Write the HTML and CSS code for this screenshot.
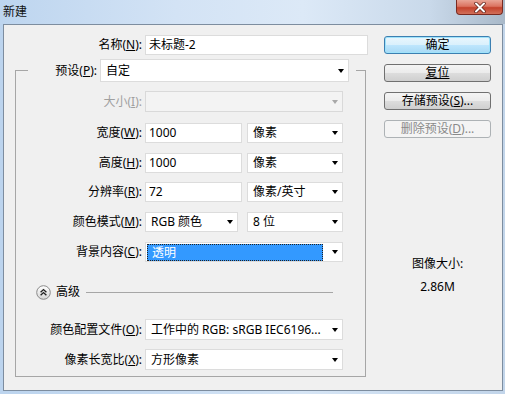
FILE: index.html
```html
<!DOCTYPE html>
<html lang="zh-CN">
<head>
    <meta charset="UTF-8">
    <title>新建</title>
    <link rel="stylesheet" href="styles.css">
</head>
<body>
<div class="window">
    <div class="titlebar">
        <span class="title">新建</span>
        <span class="close">
            <svg width="14" height="11" viewBox="0 0 14 11">
                <path d="M3 1.5 L11 9.5 M11 1.5 L3 9.5" stroke="#5a1e16" stroke-width="3.4" stroke-linecap="round"/>
                <path d="M3 1.5 L11 9.5 M11 1.5 L3 9.5" stroke="#ffffff" stroke-width="2" stroke-linecap="round"/>
            </svg>
        </span>
    </div>
    <div class="frame">
        <div class="form">
            <div class="row name-row">
                <label class="lbl">名称(<u>N</u>):</label>
                <div class="input w-name">未标题-2</div>
            </div>

            <div class="group">
                <div class="group-head">
                    <label class="lbl head-lbl">预设(<u>P</u>):</label>
                    <div class="select w-preset"><span class="val">自定</span><i class="arrow"></i></div>
                </div>

                <div class="row r-size">
                    <label class="lbl off">大小(<u>I</u>):</label>
                    <div class="select disabled w-full"><span class="val"></span><i class="arrow"></i></div>
                </div>
                <div class="row r-width">
                    <label class="lbl">宽度(<u>W</u>):</label>
                    <div class="input w-num">1000</div>
                    <div class="select w-unit"><span class="val">像素</span><i class="arrow"></i></div>
                </div>
                <div class="row r-height">
                    <label class="lbl">高度(<u>H</u>):</label>
                    <div class="input w-num">1000</div>
                    <div class="select w-unit"><span class="val">像素</span><i class="arrow"></i></div>
                </div>
                <div class="row r-res">
                    <label class="lbl">分辨率(<u>R</u>):</label>
                    <div class="input w-num">72</div>
                    <div class="select w-unit"><span class="val">像素/英寸</span><i class="arrow"></i></div>
                </div>
                <div class="row r-mode">
                    <label class="lbl">颜色模式(<u>M</u>):</label>
                    <div class="select w-mode"><span class="val">RGB 颜色</span><i class="arrow"></i></div>
                    <div class="select w-unit gap-wide"><span class="val">8 位</span><i class="arrow"></i></div>
                </div>
                <div class="row r-bg">
                    <label class="lbl">背景内容(<u>C</u>):</label>
                    <div class="select focus w-full"><span class="val">透明</span><i class="arrow"></i></div>
                </div>

                <div class="advanced">
                    <svg class="adv-btn" width="15" height="15" viewBox="0 0 15 15">
                        <defs>
                            <linearGradient id="advg" x1="0" y1="0" x2="0" y2="1">
                                <stop offset="0" stop-color="#ffffff"/>
                                <stop offset="1" stop-color="#d6d6d6"/>
                            </linearGradient>
                        </defs>
                        <circle cx="7.5" cy="7.5" r="6.8" fill="url(#advg)" stroke="#8a8a8a"/>
                        <path d="M4.6 7.2 L7.5 4.6 L10.4 7.2 M4.6 10.2 L7.5 7.6 L10.4 10.2" fill="none" stroke="#222" stroke-width="1.4"/>
                    </svg>
                    <span class="adv-text">高级</span>
                    <span class="adv-line"></span>
                </div>

                <div class="row r-profile">
                    <label class="lbl">颜色配置文件(<u>O</u>):</label>
                    <div class="select w-full"><span class="val">工作中的 RGB: sRGB IEC6196...</span><i class="arrow"></i></div>
                </div>
                <div class="row r-aspect">
                    <label class="lbl">像素长宽比(<u>X</u>):</label>
                    <div class="select w-full"><span class="val">方形像素</span><i class="arrow"></i></div>
                </div>
            </div>
        </div>

        <div class="side">
            <button class="btn default">确定</button>
            <button class="btn"><u>复位</u></button>
            <button class="btn">存储预设(<u>S</u>)...</button>
            <button class="btn disabled">删除预设(<u>D</u>)...</button>
            <div class="info">
                <div>图像大小:</div>
                <div class="info-size">2.86M</div>
            </div>
        </div>
    </div>
</div>
</body>
</html>
```

FILE: styles.css
```css
/* page */
body {
  margin: 0;
  font-family: "Noto Sans", "Noto Sans CJK SC", sans-serif;
  font-size: 12px;
  color: #000;
}

.window {
  width: 505px;
  height: 394px;
  overflow: hidden;
  background: linear-gradient(to right, #bcd4ee, #c8dcf2 30%, #d6e5f5 60%, #c2d5ea 100%);
}

/* title bar */
.titlebar {
  height: 24px;
  display: flex;
  justify-content: space-between;
  align-items: flex-start;
  background: linear-gradient(to right, #bdd5ef 0%, #d3e3f5 35%, #dce9f7 60%, #c9d9ea 85%, #a9b9c9 100%);
}

.title {
  margin: 3px 0 0 3px;
  line-height: 18px;
  font-size: 12px;
  color: #111;
}

.close {
  width: 45px;
  height: 14px;
  margin-right: 2px;
  border: 1px solid #7a2a20;
  border-top: none;
  border-radius: 0 0 4px 4px;
  background: linear-gradient(#e9a596 0%, #db7360 45%, #c4422c 55%, #d1705a 100%);
  display: flex;
  justify-content: center;
  align-items: center;
}

/* client area */
.frame {
  height: 365px;
  margin: 0 2px 0 3px;
  border: 1px solid #7d8d9f;
  background: #f0f0f0;
  display: flex;
}

.form {
  width: 364px;
}

.row {
  display: flex;
  align-items: center;
  height: 20px;
}

.lbl {
  text-align: right;
  margin-right: 3px;
  white-space: nowrap;
  line-height: 16px;
}

.lbl.off {
  color: #a0a0a0;
}

.name-row {
  margin-top: 10px;
}

.name-row .lbl {
  width: 138px;
}

/* fields */
.input,
.select {
  box-sizing: border-box;
  height: 100%;
  background: #fff;
  border: 1px solid #dcdcdc;
  display: flex;
  align-items: center;
  white-space: nowrap;
  line-height: 16px;
}

.input {
  padding-left: 3px;
}

.select .val {
  flex: 1;
  padding-left: 5px;
  overflow: hidden;
}

.arrow {
  width: 0;
  height: 0;
  margin-right: 4px;
  border-left: 3.5px solid transparent;
  border-right: 3.5px solid transparent;
  border-top: 4px solid #000;
}

.select.disabled {
  background: #f3f3f3;
  border-color: #d9d9d9;
}

.select.disabled .arrow {
  border-top-color: #a8a8a8;
}

.select.focus .val {
  flex: none;
  box-sizing: border-box;
  width: 176px;
  height: 17px;
  margin-left: 1px;
  padding-left: 4px;
  background: #3399ff;
  color: #fff;
  border: 1px dotted #222;
}

.select.focus .arrow {
  margin-left: auto;
}

.w-name { width: 223px; }
.w-preset { width: 249px; }
.w-full { width: 198px; }
.w-num { width: 97px; }
.w-unit { width: 96px; margin-left: 5px; }
.w-mode { width: 93px; }
.w-unit.gap-wide { margin-left: 9px; }

/* group box */
.group {
  width: 351px;
  box-sizing: border-box;
  margin: 15px 0 0 11px;
  padding-bottom: 6px;
  border: 1px solid #a6a6a6;
}

.group .row .lbl {
  width: 126px;
}

.group-head {
  display: flex;
  align-items: center;
  width: fit-content;
  height: 23px;
  margin: -12px 0 0 12px;
  padding-right: 7px;
  background: #f0f0f0;
}

.head-lbl {
  width: 69px;
}

.r-size { height: 21px; margin-top: 9px; }
.r-width { margin-top: 11px; }
.r-height { margin-top: 10px; }
.r-res { margin-top: 9px; }
.r-mode { margin-top: 10px; }
.r-bg { margin-top: 10px; }
.r-profile { height: 21px; margin-top: 20px; }
.r-aspect { height: 21px; margin-top: 9px; }

.advanced {
  display: flex;
  align-items: center;
  height: 14px;
  margin: 23px 32px 0 20px;
}

.adv-btn {
  display: block;
  flex: none;
}

.adv-text {
  margin-left: 5px;
  line-height: 16px;
}

.adv-line {
  flex: 1;
  margin-left: 6px;
  border-top: 1px solid #a6a6a6;
}

/* buttons */
.side {
  width: 107px;
  margin-left: 16px;
  padding-top: 11px;
  display: flex;
  flex-direction: column;
}

.btn {
  height: 18px;
  margin: 0 0 10px 0;
  padding: 0;
  font-family: inherit;
  font-size: 12px;
  line-height: 14px;
  color: #000;
  border: 1px solid #707070;
  border-radius: 3px;
  background: linear-gradient(#f4f4f4 0%, #ebebeb 50%, #dddddd 51%, #cfcfcf 100%);
}

.btn.default {
  border-color: #3c7fb1;
  box-shadow: inset 0 0 0 1px #9fe3fb;
  background: linear-gradient(#eaf6fd 0%, #d9f0fc 50%, #bee6fd 51%, #a7d9f5 100%);
}

.btn.disabled {
  color: #8a8a8a;
  border-color: #adb2b5;
  background: #f4f4f4;
}

.info {
  margin-top: 108px;
  text-align: center;
  line-height: 16px;
}

.info-size {
  margin-top: 7px;
}
```
